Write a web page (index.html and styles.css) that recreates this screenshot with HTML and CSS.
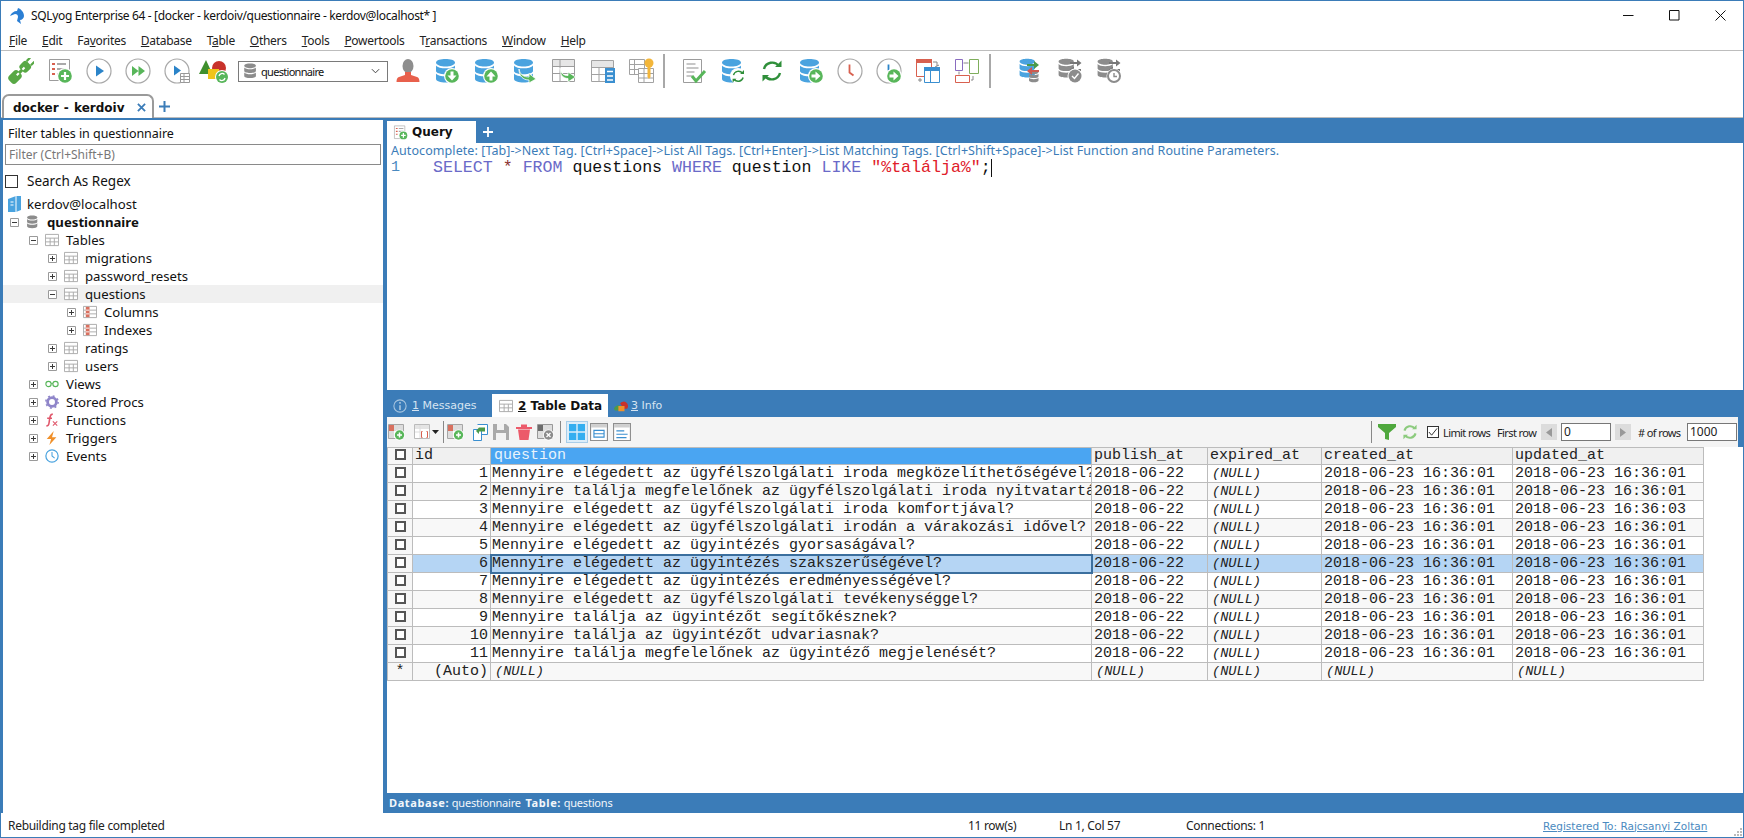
FILE: index.html
```html
<!DOCTYPE html>
<html lang="en">
<head>
    <meta charset="UTF-8">
    <title>SQLyog Enterprise 64</title>
    <link rel="stylesheet" href="styles.css">
</head>
<body>
<svg class="defs" xmlns="http://www.w3.org/2000/svg">
    <symbol id="db" viewBox="0 0 26 26">
        <path d="M2 4.5C2 2 7 1 11.5 1S21 2 21 4.5 16 8.5 11.5 8.5 2 7 2 4.5z" fill="#4aa3df"/>
        <path d="M2 7.5c1.500 2 5.500 2.800 9.500 2.800S19.500 9.500 21 7.500v5.500c0 2-4.500 3.200-9.500 3.200S2 15 2 13z" fill="#4aa3df"/>
        <path d="M2 15.500c1.500 2 5.500 2.800 9.500 2.800s8-.8 9.500-2.800V21c0 2.200-4.500 3.500-9.500 3.500S2 23.200 2 21z" fill="#4aa3df"/>
    </symbol>
    <symbol id="db-grey" viewBox="0 0 26 26">
        <path d="M2 4.500C2 2 7 1 11.500 1S21 2 21 4.500 16 8.500 11.500 8.500 2 7 2 4.500z" fill="#8c8c8c"/>
        <path d="M2 7.500c1.500 2 5.500 2.800 9.500 2.800S19.500 9.500 21 7.500v5.500c0 2-4.500 3.200-9.500 3.200S2 15 2 13z" fill="#8c8c8c"/>
        <path d="M2 15.500c1.500 2 5.500 2.800 9.500 2.800s8-.8 9.500-2.800V21c0 2.200-4.500 3.500-9.500 3.500S2 23.200 2 21z" fill="#8c8c8c"/>
    </symbol>
    <symbol id="grid" viewBox="0 0 15 15">
        <path d="M.5 1.500h14v12H.5zM.5 5.500h14M.5 9.500h14M5.500 5.500v8M10 5.500v8" fill="#fff" stroke="#a9a9a9"/>
    </symbol>
    <symbol id="grid-red" viewBox="0 0 15 15">
        <path d="M.5 1.500h14v12H.5zM.5 5.500h14M.5 9.500h14" fill="#fff" stroke="#a9a9a9"/>
        <rect x="3" y="2" width="4" height="11" fill="#d8705f"/>
        <path d="M3 5.500h4M3 9.500h4" stroke="#fff"/>
    </symbol>
    <symbol id="plus-box" viewBox="0 0 9 9">
        <path d="M.5.500h8v8h-8z" fill="#fff" stroke="#9a9a9a"/>
        <path d="M2 4.500h5M4.500 2v5" stroke="#3a3a3a"/>
    </symbol>
    <symbol id="minus-box" viewBox="0 0 9 9">
        <path d="M.5.500h8v8h-8z" fill="#fff" stroke="#9a9a9a"/>
        <path d="M2 4.500h5" stroke="#3a3a3a"/>
    </symbol>
    <symbol id="badge-plus" viewBox="0 0 26 26">
        <circle cx="18" cy="18" r="8" fill="#fff"/><circle cx="18" cy="18" r="6.800" fill="#58b65a"/>
        <path d="M14 18h8M18 14v8" stroke="#fff" stroke-width="2.200"/>
    </symbol>
    <symbol id="badge-right" viewBox="0 0 26 26">
        <circle cx="18" cy="18" r="8" fill="#fff"/><circle cx="18" cy="18" r="6.800" fill="#58b65a"/>
        <path d="M13.500 16.500h4V13.500l5 4.500-5 4.500v-3h-4z" fill="#fff"/>
    </symbol>
    <symbol id="badge-down" viewBox="0 0 26 26">
        <circle cx="18" cy="18" r="8" fill="#fff"/><circle cx="18" cy="18" r="6.800" fill="#58b65a"/>
        <path d="M16.500 13.500h3v4h3l-4.500 5-4.500-5h3z" fill="#fff"/>
    </symbol>
    <symbol id="badge-up" viewBox="0 0 26 26">
        <circle cx="18" cy="18" r="8" fill="#fff"/><circle cx="18" cy="18" r="6.800" fill="#58b65a"/>
        <path d="M16.500 22.500h3v-4h3l-4.500-5-4.500 5h3z" fill="#fff"/>
    </symbol>
    <symbol id="arrows-sync" viewBox="0 0 26 26">
        <path d="M5 11a8.500 8.500 0 0 1 15-3M21 15a8.500 8.500 0 0 1-15 3" fill="none" stroke="#2f8f3a" stroke-width="2.400"/>
        <path d="M16 9h6.500V2.500zM10 17H3.500v6.500z" fill="#2f8f3a"/>
    </symbol>
    <symbol id="swap-arrows" viewBox="0 0 26 26">
        <path d="M9 6h7V3l5 4-5 4V8H9z" fill="#4a9a4a"/>
        <path d="M21 13h-7v-3l-5 4 5 4v-3h7z" fill="#cf5a50" transform="translate(0 -1)"/>
    </symbol>
    <symbol id="swap-arrows-grey" viewBox="0 0 26 26">
        <path d="M13 4h7V1.500l4.500 3.500L20 8.500V6h-7z" fill="#777"/>
        <path d="M24 11h-7V8.500L12.500 12l4.500 3.500V13h7z" fill="#777"/>
    </symbol>
    <symbol id="ring" viewBox="0 0 26 26">
        <circle cx="13" cy="13" r="12" fill="#fff" stroke="#a8a8a8" stroke-width="1.200"/>
    </symbol>
    <symbol id="mini-new" viewBox="0 0 18 18">
        <path d="M.5 1.500h15v14H.5z" fill="#fff" stroke="#a6a6a6"/>
        <rect x="1" y="2" width="5" height="6" fill="#d8705f"/><rect x="6" y="2" width="9" height="6" fill="#ddd"/>
        <rect x="1" y="8" width="5" height="7" fill="#ddd"/>
        <circle cx="11.500" cy="12" r="5.500" fill="#fff"/><circle cx="11.500" cy="12" r="4.700" fill="#58b65a"/>
        <path d="M9 12h5M11.500 9.500v5" stroke="#fff" stroke-width="1.500"/>
    </symbol>
</svg>

<div class="window">
    <header class="titlebar">
        <svg class="app-logo" viewBox="0 0 16 16"><path d="M8 0c3 1 6 4 6 8 0 2-2 4-4 4l1 4-4-3 1-4c0-2-1-3-3-3L0 8c1-3 4-5 7-5z" fill="#2b7fd4"/></svg>
        <span class="title-text">SQLyog Enterprise 64 - [docker - kerdoiv/questionnaire - kerdov@localhost* ]</span>
        <div class="win-btns">
            <svg viewBox="0 0 11 11"><path d="M0 5.500h10.500" stroke="#111"/></svg>
            <svg viewBox="0 0 11 11"><path d="M.5.500h9.500v9.500H.5z" fill="none" stroke="#111"/></svg>
            <svg viewBox="0 0 11 11"><path d="M.5.500l10 10M10.500.500l-10 10" stroke="#111"/></svg>
        </div>
    </header>

    <nav class="menubar">
        <span><u>F</u>ile</span>
        <span><u>E</u>dit</span>
        <span>Fa<u>v</u>orites</span>
        <span><u>D</u>atabase</span>
        <span>T<u>a</u>ble</span>
        <span><u>O</u>thers</span>
        <span><u>T</u>ools</span>
        <span><u>P</u>owertools</span>
        <span>T<u>r</u>ansactions</span>
        <span><u>W</u>indow</span>
        <span><u>H</u>elp</span>
    </nav>

    <div class="toolbar">
        <div class="tool">
            <svg viewBox="0 0 26 26"><g transform="rotate(-45 13 13)"><rect x="-2" y="8" width="13" height="10" rx="3.500" fill="#58a845"/><rect x="14" y="8" width="10" height="10" rx="3" fill="#58a845"/><path d="M24 10h5M24 16h5" stroke="#58a845" stroke-width="2.200"/><path d="M7 13h11" stroke="#fff" stroke-width="2"/><path d="M10 13h5" stroke="#58a845" stroke-width="3"/></g></svg>
        </div>
        <div class="tool">
            <svg viewBox="0 0 26 26"><path d="M2.500 1.500h20v21h-20z" fill="#fff" stroke="#9c9c9c"/><path d="M5 6h3M5 11h3M5 16h3" stroke="#d8604f" stroke-width="2"/><path d="M10 6h9M10 11h9M10 16h4" stroke="#aaa" stroke-width="2"/><use href="#badge-plus"/></svg>
        </div>
        <div class="tool">
            <svg viewBox="0 0 26 26"><use href="#ring"/><path d="M10 7.500v11l8-5.500z" fill="#2b84c9"/></svg>
        </div>
        <div class="tool">
            <svg viewBox="0 0 26 26"><use href="#ring"/><path d="M7 8v10l6.500-5zM13.500 8v10l6.500-5z" fill="#58b65a"/></svg>
        </div>
        <div class="tool">
            <svg viewBox="0 0 26 26"><use href="#ring"/><path d="M10 7.500v10l7-5z" fill="#2b84c9"/><path d="M16.500 15.500h9v9h-9zM16.500 18.500h9M16.500 21.500h9M20 15.500v9" fill="#fff" stroke="#999"/></svg>
        </div>
        <div class="tool tool-shapes">
            <svg viewBox="0 0 30 26"><path d="M7 2l6.500 14H0z" fill="#3f8f2d"/><circle cx="20" cy="10" r="7" fill="#c8322b"/><rect x="9" y="11" width="11" height="10" fill="#f0c419"/><circle cx="23" cy="19" r="7" fill="#fff"/><circle cx="23" cy="19" r="6" fill="#58b65a"/><path d="M20 18a3.200 3.200 0 0 1 5.500-1.500M26 20a3.200 3.200 0 0 1-5.500 1.500" fill="none" stroke="#fff" stroke-width="1.300"/></svg>
        </div>

        <div class="db-combo">
            <svg class="combo-db" viewBox="0 0 26 26"><use href="#db-grey"/></svg>
            <span>questionnaire</span>
            <svg class="combo-arrow" viewBox="0 0 10 6"><path d="M1 1l4 4 4-4" fill="none" stroke="#444" stroke-width="1.100"/></svg>
        </div>

        <div class="tool">
            <svg viewBox="0 0 26 26"><ellipse cx="13" cy="8" rx="5.500" ry="7" fill="#8e8e8e"/><path d="M10 14h6v3l6 2c1.500.5 2.500 2 2.500 5h-23c0-3 1-4.500 2.500-5l6-2z" fill="#e8604c"/></svg>
        </div>
        <div class="tool">
            <svg viewBox="0 0 26 26"><use href="#db"/><use href="#badge-down"/></svg>
        </div>
        <div class="tool">
            <svg viewBox="0 0 26 26"><use href="#db"/><use href="#badge-up"/></svg>
        </div>
        <div class="tool">
            <svg viewBox="0 0 26 26"><use href="#db"/><path d="M7 11c1 6 5 8 10 8v-3.500l7 5.500-7 4v-3C11 22 7 18 7 11z" fill="#58b65a" stroke="#fff" stroke-width=".8"/></svg>
        </div>
        <div class="tool">
            <svg viewBox="0 0 26 26"><path d="M1.500 1.500h22v22h-22z" fill="#fff" stroke="#9c9c9c"/><rect x="2" y="2" width="21" height="6" fill="#e6e6e6"/><path d="M1.500 8.500h22M1.500 15.500h22M9 1.500v22" stroke="#9c9c9c"/><path d="M9 10c1 6 4 7.500 8 7.500V14l7.500 5-7.500 5v-3.500C12 20.500 9 17 9 10z" fill="#58b65a" stroke="#fff" stroke-width=".8"/></svg>
        </div>
        <div class="tool">
            <svg viewBox="0 0 26 26"><path d="M1.500 2.500h22v21h-22z" fill="#fff" stroke="#a2a2a2"/><rect x="2" y="3" width="21" height="6" fill="#e6e6e6"/><path d="M1.500 9.500h22M1.500 16.500h22M9 9.500v14M16 9.500v14" stroke="#a2a2a2"/><rect x="15" y="10" width="10" height="15" fill="#3a8fd0"/><path d="M17 13.500h6M17 18h6M17 22h6" stroke="#fff" stroke-width="1.600"/></svg>
        </div>
        <div class="tool">
            <svg viewBox="0 0 26 26"><path d="M.5 1.500h15v15H.5zM.5 6.500h15M.5 11.500h15M5.500 1.500v15" fill="#fff" stroke="#a2a2a2"/><path d="M9.500 10.500h15v14h-15zM9.500 15.500h15M9.500 20h15M15 10.500v14" fill="#fff" stroke="#a2a2a2"/><circle cx="20" cy="5" r="4.500" fill="#f3b63a"/><path d="M18.500 8h3v11l-1.500 2-1.500-2z" fill="#f3b63a"/></svg>
        </div>

        <div class="tb-sep tb-sep-first"></div>

        <div class="tool">
            <svg viewBox="0 0 26 26"><path d="M2.500 1.500h18v23h-18z" fill="#fff" stroke="#9c9c9c"/><path d="M5.500 6h9M5.500 10h12M5.500 14h8M5.500 18h6" stroke="#b5b5b5" stroke-width="1.600"/><path d="M11 18l4 5 9-10" fill="none" stroke="#58b65a" stroke-width="3"/></svg>
        </div>
        <div class="tool">
            <svg viewBox="0 0 26 26"><use href="#db"/><circle cx="18" cy="18" r="8" fill="#fff"/><g transform="translate(10.500 10.500) scale(.6)"><use href="#arrows-sync" width="26" height="26"/></g></svg>
        </div>
        <div class="tool">
            <svg viewBox="0 0 26 26"><use href="#arrows-sync"/></svg>
        </div>
        <div class="tool">
            <svg viewBox="0 0 26 26"><use href="#db"/><use href="#badge-right"/></svg>
        </div>
        <div class="tool">
            <svg viewBox="0 0 26 26"><use href="#ring"/><path d="M12.500 6.500v8l4 3" fill="none" stroke="#d8604f" stroke-width="1.800"/></svg>
        </div>
        <div class="tool">
            <svg viewBox="0 0 26 26"><use href="#ring"/><path d="M12.500 6.500v6" stroke="#2b84c9" stroke-width="1.800"/><use href="#badge-right"/></svg>
        </div>
        <div class="tool">
            <svg viewBox="0 0 26 26"><path d="M1.500 1.500h15v17h-15z" fill="#fff" stroke="#d8604f"/><rect x="1" y="1" width="16" height="4" fill="#d8604f"/><path d="M18 4h4v4M20 9l2 -1 2-1" stroke="#888" fill="none"/><path d="M9.500 9.500h15v15h-15z" fill="#fff" stroke="#3a8fd0"/><rect x="9" y="9" width="16" height="4" fill="#3a8fd0"/><path d="M15.500 13v11" stroke="#3a8fd0"/><path d="M3 22h4M5 20v4" stroke="#888"/></svg>
        </div>
        <div class="tool">
            <svg viewBox="0 0 26 26"><path d="M1.500 1.500h7v11h-7z" fill="#fff" stroke="#8a6cc0"/><path d="M15.500 1.500h9v14h-9z" fill="#fff" stroke="#7fae5c"/><path d="M1.500 17.500h14v7h-14z" fill="#fff" stroke="#d8604f"/><path d="M9.500 5h5M5 13.500v3M19 18v4h-2" fill="none" stroke="#888"/></svg>
        </div>

        <div class="tb-sep tb-sep-second"></div>

        <div class="tool">
            <svg viewBox="0 0 26 26"><g transform="scale(.8)"><use href="#db" width="26" height="26"/></g><g transform="translate(10 12) scale(.5)"><use href="#db-grey" width="26" height="26"/></g><use href="#swap-arrows"/></svg>
        </div>
        <div class="tool">
            <svg viewBox="0 0 26 26"><g transform="scale(.8)"><use href="#db-grey" width="26" height="26"/></g><use href="#swap-arrows-grey"/><circle cx="18" cy="18" r="7.500" fill="#fff"/><circle cx="18" cy="18" r="6.500" fill="#8c8c8c"/><path d="M15 18l2.500 2.500 4-5" fill="none" stroke="#fff" stroke-width="1.400"/></svg>
        </div>
        <div class="tool">
            <svg viewBox="0 0 26 26"><g transform="scale(.8)"><use href="#db-grey" width="26" height="26"/></g><use href="#swap-arrows-grey"/><circle cx="18" cy="18" r="7.500" fill="#fff"/><circle cx="18" cy="18" r="6" fill="none" stroke="#8c8c8c" stroke-width="2"/><path d="M18 15v3.500h3" fill="none" stroke="#8c8c8c" stroke-width="1.400"/></svg>
        </div>
    </div>

    <div class="conn-tabs">
        <div class="conn-tab">
            <span>docker - kerdoiv</span>
            <svg viewBox="0 0 10 10"><path d="M1 1l8 8M9 1l-8 8" stroke="#3b7cb8" stroke-width="2"/></svg>
        </div>
        <svg class="tab-plus" viewBox="0 0 11 11"><path d="M0 5.500h11M5.500 0v11" stroke="#3b7cb8" stroke-width="2"/></svg>
    </div>

    <main class="main">
        <aside class="browser">
            <div class="filter-label">Filter tables in questionnaire</div>
            <div class="filter-input">Filter (Ctrl+Shift+B)</div>
            <div class="regex-row"><span class="regex-box"></span>Search As Regex</div>
            <ul class="tree">
                <li class="tree-row tree-root">
                    <svg class="t-root" viewBox="0 0 13 16"><path d="M0 3l8-3h5v14l-5 2H0z" fill="#4aa3df"/><path d="M8 0v16" stroke="#fff"/><path d="M2.500 6h3M2.500 9h3" stroke="#fff"/></svg>
                    kerdov@localhost
                </li>
                <li class="tree-row lv0 tree-db">
                    <svg class="exp"><use href="#minus-box"/></svg>
                    <svg class="t-ico" viewBox="0 0 26 26"><use href="#db-grey"/></svg>
                    questionnaire
                </li>
                <li class="tree-row lv1">
                    <svg class="exp"><use href="#minus-box"/></svg>
                    <svg class="t-ico"><use href="#grid"/></svg>
                    Tables
                </li>
                <li class="tree-row lv2">
                    <svg class="exp"><use href="#plus-box"/></svg>
                    <svg class="t-ico"><use href="#grid"/></svg>
                    migrations
                </li>
                <li class="tree-row lv2">
                    <svg class="exp"><use href="#plus-box"/></svg>
                    <svg class="t-ico"><use href="#grid"/></svg>
                    password_resets
                </li>
                <li class="tree-row lv2 tree-current">
                    <svg class="exp"><use href="#minus-box"/></svg>
                    <svg class="t-ico"><use href="#grid"/></svg>
                    questions
                </li>
                <li class="tree-row lv3">
                    <svg class="exp"><use href="#plus-box"/></svg>
                    <svg class="t-ico"><use href="#grid-red"/></svg>
                    Columns
                </li>
                <li class="tree-row lv3">
                    <svg class="exp"><use href="#plus-box"/></svg>
                    <svg class="t-ico"><use href="#grid-red"/></svg>
                    Indexes
                </li>
                <li class="tree-row lv2">
                    <svg class="exp"><use href="#plus-box"/></svg>
                    <svg class="t-ico"><use href="#grid"/></svg>
                    ratings
                </li>
                <li class="tree-row lv2">
                    <svg class="exp"><use href="#plus-box"/></svg>
                    <svg class="t-ico"><use href="#grid"/></svg>
                    users
                </li>
                <li class="tree-row lv1">
                    <svg class="exp"><use href="#plus-box"/></svg>
                    <svg class="t-ico" viewBox="0 0 16 16"><circle cx="4" cy="8" r="3" fill="none" stroke="#58b65a" stroke-width="1.300"/><circle cx="12" cy="8" r="3" fill="none" stroke="#58b65a" stroke-width="1.300"/><path d="M7 7.500h2" stroke="#58b65a"/></svg>
                    Views
                </li>
                <li class="tree-row lv1">
                    <svg class="exp"><use href="#plus-box"/></svg>
                    <svg class="t-ico" viewBox="0 0 16 16"><circle cx="8" cy="8" r="5" fill="none" stroke="#8f85c9" stroke-width="3.200"/><circle cx="8" cy="8" r="7" fill="none" stroke="#8f85c9" stroke-width="1.800" stroke-dasharray="2.200 3.300"/></svg>
                    Stored Procs
                </li>
                <li class="tree-row lv1">
                    <svg class="exp"><use href="#plus-box"/></svg>
                    <svg class="t-ico" viewBox="0 0 16 16"><path d="M9 1.500C6.500 1 6 3 5.500 5.500L4.500 12c-.3 2-1.500 3-3 2.500M2.500 6H8" fill="none" stroke="#e0566a" stroke-width="1.800"/><path d="M9 9.500l5 5M14 9.500l-5 5" stroke="#e0566a" stroke-width="1.200"/></svg>
                    Functions
                </li>
                <li class="tree-row lv1">
                    <svg class="exp"><use href="#plus-box"/></svg>
                    <svg class="t-ico" viewBox="0 0 16 16"><path d="M10 0 2 9h5l-2 7 8-9H8z" fill="#f0902a"/></svg>
                    Triggers
                </li>
                <li class="tree-row lv1">
                    <svg class="exp"><use href="#plus-box"/></svg>
                    <svg class="t-ico" viewBox="0 0 16 16"><circle cx="8" cy="8" r="7" fill="#fff" stroke="#4aa3df" stroke-width="1.400"/><path d="M8 3.500V8l3 2.500" fill="none" stroke="#4aa3df" stroke-width="1.200"/></svg>
                    Events
                </li>
            </ul>
        </aside>

        <section class="work">
            <div class="query-tabs">
                <div class="query-tab">
                    <svg viewBox="0 0 26 26"><path d="M2.500 1.500h18v22h-18z" fill="#fff" stroke="#9c9c9c"/><path d="M5 6h3M5 11h3M5 16h3" stroke="#d8604f" stroke-width="2"/><path d="M10 6h8M10 11h8" stroke="#aaa" stroke-width="2"/><use href="#badge-plus"/></svg>
                    <span>Query</span>
                </div>
                <svg class="query-plus" viewBox="0 0 11 11"><path d="M0 5.500h11M5.500 0v11" stroke="#fff" stroke-width="2"/></svg>
            </div>

            <div class="editor">
                <div class="hint">Autocomplete: [Tab]-&gt;Next Tag. [Ctrl+Space]-&gt;List All Tags. [Ctrl+Enter]-&gt;List Matching Tags. [Ctrl+Shift+Space]-&gt;List Function and Routine Parameters.</div>
                <div class="code-line">
                    <span class="line-no">1</span>
                    <code class="sql"><span class="kw">SELECT</span> <span class="star">*</span> <span class="kw">FROM</span> questions <span class="kw">WHERE</span> question <span class="kw">LIKE</span> <span class="str">"%találja%"</span>;<span class="caret"></span></code>
                </div>
            </div>

            <div class="result-tabs">
                <div class="result-tab">
                    <svg viewBox="0 0 16 16"><circle cx="8" cy="8" r="7" fill="none" stroke="#a9c6e0" stroke-width="1.200"/><path d="M8 3.500v2M8 7v5.500" stroke="#a9c6e0" stroke-width="1.800"/></svg>
                    <span><u>1</u> Messages</span>
                </div>
                <div class="result-tab result-tab-on">
                    <svg viewBox="0 0 16 16"><use href="#grid"/></svg>
                    <span><u>2</u> Table Data</span>
                </div>
                <div class="result-tab result-tab-info">
                    <svg viewBox="0 0 16 16"><path d="M0 11a5 4 0 0 1 8-3l-2 5H1z" fill="#4a9a4a"/><path d="M7 5a5 5 0 0 1 8 6l-4 0z" fill="#c8322b"/><rect x="5" y="8" width="7" height="6" fill="#f0902a"/></svg>
                    <span><u>3</u> Info</span>
                </div>
            </div>

            <div class="result-bar">
                <svg class="rb rb-first"><use href="#mini-new"/></svg>
                <svg class="rb rb-wide" viewBox="0 0 18 18"><path d="M.5 1.500h15v14H.5z" fill="#fff" stroke="#bbb"/><rect x="1" y="2" width="14" height="4" fill="#e4e4e4"/><path d="M1 9h5M6 2v13" stroke="#ddd"/><path d="M8.500 8.500h-1v6h1M12.500 8.500h1v6h-1" fill="none" stroke="#d8604f"/></svg>
                <svg class="rb-caret" viewBox="0 0 7 4"><path d="M0 0h7L3.500 4z" fill="#222"/></svg>
                <span class="rb-sep"></span>
                <svg class="rb"><use href="#mini-new"/></svg>
                <svg class="rb" viewBox="0 0 18 18"><path d="M3.500 6.500h8v11h-8zM7.500 1.500h10v10h-6" fill="#fff" stroke="#3a8fd0"/><path d="M15 4.500H9L6 8l3 3V8.500h6z" fill="#4a9a4a"/></svg>
                <svg class="rb" viewBox="0 0 18 18"><path d="M1 1h13l3 3v13H1z" fill="#a9a9a9"/><rect x="5" y="1" width="7" height="6" fill="#f2f2f2"/><rect x="4" y="10" width="10" height="7" fill="#f2f2f2"/></svg>
                <svg class="rb" viewBox="0 0 18 18"><path d="M1 4h16v2H1zM3 6.500h12L13.500 17h-9z" fill="#ec5a6a"/><rect x="6" y="1.500" width="6" height="3" fill="#ec5a6a"/></svg>
                <svg class="rb" viewBox="0 0 18 18"><path d="M.5 1.500h15v14H.5z" fill="#ddd" stroke="#999"/><rect x="1" y="2" width="5" height="6" fill="#6c6c6c"/><circle cx="11.500" cy="12" r="5.500" fill="#fff"/><circle cx="11.500" cy="12" r="4.700" fill="#8c8c8c"/><path d="M9.500 10l4 4M13.500 10l-4 4" stroke="#fff" stroke-width="1.300"/></svg>
                <span class="rb-sep rb-sep-b"></span>
                <span class="view-on"><svg viewBox="0 0 16 16"><path d="M0 0h7.300v7.300H0zM8.700 0H16v7.300H8.700zM0 8.700h7.300V16H0zM8.700 8.700H16V16H8.700z" fill="#33aef0"/></svg></span>
                <svg class="rb" viewBox="0 0 16 16"><path d="M.5.500h15v15H.5z" fill="#fff" stroke="#8f8f8f"/><rect x="1" y="1" width="14" height="3" fill="#cfcfcf"/><path d="M3.500 6.500h9v3h-9zM3.500 9.500h9v3h-9z" fill="#fff" stroke="#3a8fd0"/></svg>
                <svg class="rb" viewBox="0 0 16 16"><path d="M.5.500h15v15H.5z" fill="#fff" stroke="#8f8f8f"/><rect x="1" y="1" width="14" height="3" fill="#cfcfcf"/><path d="M3 7h7M3 10h10M3 13h9" stroke="#3a8fd0"/></svg>

                <span class="rb-sep rb-sep-c"></span>
                <svg class="rb" viewBox="0 0 18 18"><path d="M0 1h18v3l-7 6v7l-4-1v-6L0 4z" fill="#4fa83d"/></svg>
                <svg class="rb rb-refresh" viewBox="0 0 26 26"><path d="M5 11a8.500 8.500 0 0 1 15-3M21 15a8.500 8.500 0 0 1-15 3" fill="none" stroke="#8ccb7e" stroke-width="3"/><path d="M16 9h6.500V2.500zM10 17H3.500v6.500z" fill="#8ccb7e"/></svg>
                <span class="limit-box"><svg viewBox="0 0 11 11"><path d="M1 5.500l3 3.500 6-7.500" fill="none" stroke="#333" stroke-width="1.100"/></svg></span>
                <span class="limit-label">Limit rows</span>
                <span class="first-label">First row</span>
                <span class="pager"><svg viewBox="0 0 6 9"><path d="M6 0v9L0 4.500z" fill="#999"/></svg></span>
                <span class="num-input first-input">0</span>
                <span class="pager"><svg viewBox="0 0 6 9"><path d="M0 0v9l6-4.500z" fill="#999"/></svg></span>
                <span class="rows-label"># of rows</span>
                <span class="num-input rows-input">1000</span>
            </div>

            <div class="grid-wrap">
                <table class="grid">
                    <colgroup>
                        <col class="c-check"><col class="c-id"><col class="c-question"><col class="c-pub"><col class="c-exp"><col class="c-created"><col class="c-updated">
                    </colgroup>
                    <thead>
                        <tr><th class="mark"><i class="chk"></i></th><th>id</th><th class="sel-col">question</th><th>publish_at</th><th>expired_at</th><th>created_at</th><th>updated_at</th></tr>
                    </thead>
                    <tbody>
                        <tr><td class="mark"><i class="chk"></i></td><td class="num">1</td><td class="q">Mennyire elégedett az ügyfélszolgálati iroda megközelíthetőségével?</td><td>2018-06-22</td><td class="null">(NULL)</td><td>2018-06-23 16:36:01</td><td>2018-06-23 16:36:01</td></tr>
                        <tr><td class="mark"><i class="chk"></i></td><td class="num">2</td><td class="q">Mennyire találja megfelelőnek az ügyfélszolgálati iroda nyitvatartási idejével?</td><td>2018-06-22</td><td class="null">(NULL)</td><td>2018-06-23 16:36:01</td><td>2018-06-23 16:36:01</td></tr>
                        <tr><td class="mark"><i class="chk"></i></td><td class="num">3</td><td class="q">Mennyire elégedett az ügyfélszolgálati iroda komfortjával?</td><td>2018-06-22</td><td class="null">(NULL)</td><td>2018-06-23 16:36:01</td><td>2018-06-23 16:36:03</td></tr>
                        <tr><td class="mark"><i class="chk"></i></td><td class="num">4</td><td class="q">Mennyire elégedett az ügyfélszolgálati irodán a várakozási idővel?</td><td>2018-06-22</td><td class="null">(NULL)</td><td>2018-06-23 16:36:01</td><td>2018-06-23 16:36:01</td></tr>
                        <tr><td class="mark"><i class="chk"></i></td><td class="num">5</td><td class="q">Mennyire elégedett az ügyintézés gyorsaságával?</td><td>2018-06-22</td><td class="null">(NULL)</td><td>2018-06-23 16:36:01</td><td>2018-06-23 16:36:01</td></tr>
                        <tr class="row-sel"><td class="mark"><i class="chk"></i></td><td class="num">6</td><td class="q cell-focus">Mennyire elégedett az ügyintézés szakszerűségével?</td><td>2018-06-22</td><td class="null">(NULL)</td><td>2018-06-23 16:36:01</td><td>2018-06-23 16:36:01</td></tr>
                        <tr><td class="mark"><i class="chk"></i></td><td class="num">7</td><td class="q">Mennyire elégedett az ügyintézés eredményességével?</td><td>2018-06-22</td><td class="null">(NULL)</td><td>2018-06-23 16:36:01</td><td>2018-06-23 16:36:01</td></tr>
                        <tr><td class="mark"><i class="chk"></i></td><td class="num">8</td><td class="q">Mennyire elégedett az ügyfélszolgálati tevékenységgel?</td><td>2018-06-22</td><td class="null">(NULL)</td><td>2018-06-23 16:36:01</td><td>2018-06-23 16:36:01</td></tr>
                        <tr><td class="mark"><i class="chk"></i></td><td class="num">9</td><td class="q">Mennyire találja az ügyintézőt segítőkésznek?</td><td>2018-06-22</td><td class="null">(NULL)</td><td>2018-06-23 16:36:01</td><td>2018-06-23 16:36:01</td></tr>
                        <tr><td class="mark"><i class="chk"></i></td><td class="num">10</td><td class="q">Mennyire találja az ügyintézőt udvariasnak?</td><td>2018-06-22</td><td class="null">(NULL)</td><td>2018-06-23 16:36:01</td><td>2018-06-23 16:36:01</td></tr>
                        <tr><td class="mark"><i class="chk"></i></td><td class="num">11</td><td class="q">Mennyire találja megfelelőnek az ügyintéző megjelenését?</td><td>2018-06-22</td><td class="null">(NULL)</td><td>2018-06-23 16:36:01</td><td>2018-06-23 16:36:01</td></tr>
                        <tr><td class="mark">*</td><td class="num">(Auto)</td><td class="null">(NULL)</td><td class="null">(NULL)</td><td class="null">(NULL)</td><td class="null">(NULL)</td><td class="null">(NULL)</td></tr>
                    </tbody>
                </table>
            </div>

            <div class="db-bar"><b>Database:</b> questionnaire <b class="db-bar-table">Table:</b> questions</div>
        </section>
    </main>

    <footer class="statusbar">
        <span class="st-msg">Rebuilding tag file completed</span>
        <span class="st-rows">11 row(s)</span>
        <span class="st-pos">Ln 1, Col 57</span>
        <span class="st-conn">Connections: 1</span>
        <a class="st-reg">Registered To: Rajcsanyi Zoltan</a>
        <svg class="st-grip" viewBox="0 0 9 9"><path d="M7 1h2v2H7zM4 4h2v2H4zM7 4h2v2H7zM1 7h2v2H1zM4 7h2v2H4zM7 7h2v2H7z" fill="#bbb"/></svg>
    </footer>
</div>
</body>
</html>
```

FILE: styles.css
```css
* {
    margin: 0;
    padding: 0;
    box-sizing: border-box;
}

html, body {
    height: 100%;
    overflow: hidden;
}

body {
    font-family: "Noto Sans", "Open Sans", sans-serif;
    font-size: 12px;
    color: #111;
    background: #fff;
}

.defs {
    display: none;
}

.window {
    width: 1744px;
    height: 838px;
    display: flex;
    flex-direction: column;
    border: 1px solid #3b7cb8;
}

/* title */
.titlebar {
    height: 29px;
    display: flex;
    align-items: center;
    padding-left: 9px;
    flex: none;
}

.app-logo {
    width: 16px;
    height: 16px;
    margin-right: 5px;
}

.title-text {
    letter-spacing: -.35px;
}

.win-btns {
    margin-left: auto;
    display: flex;
    gap: 35px;
    padding-right: 17px;
}

.win-btns svg {
    width: 11px;
    height: 11px;
}

/* menu */
.menubar {
    height: 21px;
    flex: none;
    display: flex;
    align-items: center;
    gap: 15px;
    padding-left: 8px;
    border-bottom: 1px solid #bdbdbd;
    letter-spacing: -.3px;
    color: #222;
}

/* main toolbar */
.toolbar {
    height: 42px;
    flex: none;
    display: flex;
    align-items: center;
    padding-bottom: 2px;
}

.tool {
    width: 39px;
    height: 28px;
    flex: none;
    display: flex;
    align-items: center;
    justify-content: center;
}

.tool svg {
    width: 26px;
    height: 26px;
}

.tool-shapes {
    margin-left: -2px;
}

.tool-shapes svg {
    width: 30px;
}

.db-combo {
    width: 150px;
    height: 21px;
    margin-left: 5px;
    flex: none;
    border: 1px solid #7a7a7a;
    display: flex;
    align-items: center;
    padding: 0 7px 0 4px;
    font-size: 11px;
    letter-spacing: -.7px;
}

.combo-db {
    width: 16px;
    height: 16px;
    margin-right: 2px;
}

.combo-arrow {
    width: 9px;
    height: 6px;
    margin-left: auto;
}

.tb-sep {
    width: 2px;
    height: 34px;
    flex: none;
    background: #a8a8a8;
}

.tb-sep-first {
    margin: 0 9.500px 0 2px;
}

.tb-sep-second {
    margin: 0 20.500px 0 2px;
}

/* connection tabs */
.conn-tabs {
    height: 25px;
    flex: none;
    display: flex;
    align-items: flex-end;
    padding-left: 1px;
    border-bottom: 1px solid #bdbdbd;
}

.conn-tab {
    width: 152px;
    height: 24px;
    margin-bottom: -1px;
    background: #fff;
    border: 2px solid #9a9a9a;
    border-bottom: 0;
    border-radius: 7px 7px 0 0;
    display: flex;
    align-items: center;
    padding: 1px 0 0 9px;
    font-family: "DejaVu Sans", sans-serif;
    font-weight: 700;
    font-size: 12px;
    color: #111;
}

.conn-tab span {
    word-spacing: 1px;
}

.conn-tab svg {
    width: 9px;
    height: 9px;
    margin-left: auto;
    margin-right: 6px;
}

.tab-plus {
    width: 11px;
    height: 11px;
    margin: 0 0 5px 5px;
}

/* main area */
.main {
    height: 695px;
    flex: none;
    display: flex;
    background: #3b7cb8;
    padding-left: 2px;
}

.browser {
    width: 380px;
    margin-top: 2px;
    background: #fff;
    flex: none;
}

.filter-label {
    height: 24px;
    padding: 5px 0 0 5px;
    font-size: 12.500px;
    letter-spacing: -.05px;
}

.filter-input {
    width: 376px;
    height: 21px;
    margin-left: 2px;
    border: 1px solid #8a8a8a;
    padding: 1px 3px;
    color: #777;
}

.regex-row {
    height: 18px;
    display: flex;
    align-items: center;
    margin: 7px 0 0 2px;
    font-size: 13.500px;
}

.regex-box {
    width: 13px;
    height: 13px;
    border: 1px solid #333;
    margin-right: 9px;
}

.tree {
    list-style: none;
    margin-top: 5px;
    font-size: 13.200px;
}

.tree-row {
    height: 18px;
    display: flex;
    align-items: center;
    white-space: nowrap;
}

.tree-root {
    padding-left: 5px;
}

.t-root {
    width: 13px;
    height: 16px;
    margin-right: 6px;
}

.lv0 { padding-left: 7px; }
.lv1 { padding-left: 26px; }
.lv2 { padding-left: 45px; }
.lv3 { padding-left: 64px; }

.exp {
    width: 9px;
    height: 9px;
    margin-right: 7px;
    flex: none;
}

.t-ico {
    width: 14px;
    height: 14px;
    margin-right: 7px;
    flex: none;
}

.tree-db {
    font-weight: 700;
}

.tree-current {
    background: #f0f0f0;
}

/* right side */
.work {
    flex: 1;
    margin-left: 4px;
    display: flex;
    flex-direction: column;
    min-width: 0;
}

.query-tabs {
    height: 25px;
    flex: none;
    display: flex;
    align-items: flex-end;
}

.query-tab {
    width: 89px;
    height: 22px;
    background: #fff;
    display: flex;
    align-items: center;
    padding-left: 6px;
    font-family: "DejaVu Sans", sans-serif;
    font-weight: 700;
    font-size: 12px;
    gap: 4px;
}

.query-tab svg {
    width: 15px;
    height: 15px;
}

.query-plus {
    width: 10px;
    height: 10px;
    margin: 0 0 6px 7px;
}

.editor {
    height: 247px;
    flex: none;
    background: #fff;
    padding-left: 4px;
}

.hint {
    font-size: 12.500px;
    color: #3b7cb8;
    height: 16px;
    line-height: 16px;
    white-space: nowrap;
    letter-spacing: .075px;
}

.code-line {
    display: flex;
    height: 18px;
    line-height: 18px;
}

.line-no {
    width: 42px;
    font-family: "Liberation Mono", monospace;
    font-size: 15px;
    color: #4a8ac0;
}

.sql {
    font-family: "Liberation Mono", monospace;
    font-size: 16.600px;
    color: #111;
    white-space: pre;
}

.kw {
    color: #6a6ac8;
}

.star {
    color: #8a3030;
}

.str {
    color: #e0202a;
}

.caret {
    display: inline-block;
    width: 1px;
    height: 18px;
    background: #111;
    vertical-align: top;
}

.result-tabs {
    height: 27px;
    flex: none;
    display: flex;
    align-items: flex-end;
    font-family: "DejaVu Sans", sans-serif;
    font-size: 11px;
    color: #d6e4f1;
}

.result-tab {
    height: 23px;
    display: flex;
    align-items: center;
    padding-left: 6px;
    gap: 5px;
    width: 105px;
}

.result-tab svg {
    width: 14px;
    height: 14px;
}

.result-tab-on {
    background: #fff;
    width: 116px;
    padding-left: 7px;
    color: #111;
    font-weight: 700;
    font-size: 12px;
}

.result-tab-info {
    width: auto;
    padding-left: 6px;
    gap: 3px;
}

.result-bar {
    height: 30px;
    flex: none;
    background: #f4f4f4;
    display: flex;
    align-items: center;
    margin-right: 5px;
    padding: 0 1px;
    color: #222;
    font-size: 11px;
    white-space: nowrap;
    letter-spacing: -.6px;
}

.rb {
    width: 18px;
    height: 18px;
    margin: 0 2.250px;
    flex: none;
}

.rb-first {
    margin-left: 0;
}

.rb-wide {
    margin-left: 5.750px;
    margin-right: 0;
}

.rb-caret {
    width: 7px;
    height: 4px;
    flex: none;
}

.rb-sep {
    width: 1px;
    height: 22px;
    background: #888;
    margin: 0 .750px 0 4px;
    flex: none;
}

.rb-sep-b {
    margin: 0 5px 0 2.750px;
}

.view-on {
    width: 22px;
    height: 22px;
    flex: none;
    background: #dcedf9;
    border: 1px solid #a9cde8;
    display: flex;
    align-items: center;
    justify-content: center;
}

.view-on svg {
    width: 16px;
    height: 16px;
}

.rb-sep-c {
    margin-left: auto;
    margin-right: 3.750px;
}

.rb-refresh {
    margin: 0 8px 0 2.750px;
}

.limit-box {
    width: 12px;
    height: 12px;
    border: 1px solid #333;
    background: #fff;
    flex: none;
    display: flex;
    margin-right: 4px;
}

.limit-box svg {
    width: 10px;
    height: 10px;
}

.limit-label {
    width: 54px;
    flex: none;
}

.first-label {
    width: 44px;
    flex: none;
}

.pager {
    width: 16px;
    height: 16px;
    background: #dcdcdc;
    flex: none;
    display: flex;
    align-items: center;
    justify-content: center;
}

.pager svg {
    width: 6px;
    height: 9px;
}

.num-input {
    height: 18px;
    background: #fff;
    border: 1px solid #777;
    padding-left: 2px;
    line-height: 16px;
    flex: none;
    font-size: 12px;
    letter-spacing: 0;
}

.first-input {
    width: 50px;
    margin: 0 4px;
}

.rows-label {
    width: 49px;
    margin-left: 7px;
    flex: none;
}

.rows-input {
    width: 50px;
}

/* data grid */
.grid-wrap {
    flex: 1;
    background: #fff;
    min-height: 0;
    overflow: hidden;
}

.grid {
    width: 1316px;
    table-layout: fixed;
    border-collapse: collapse;
    font-family: "Liberation Mono", monospace;
    font-size: 15px;
    color: #222;
}

.c-check { width: 25px; }
.c-id { width: 78px; }
.c-question { width: 601px; }
.c-pub { width: 116px; }
.c-exp { width: 114px; }
.c-created { width: 191px; }
.c-updated { width: 191px; }

.grid th,
.grid td {
    height: 18px;
    padding: 0 2px;
    border: 1px solid #bcbcbc;
    white-space: nowrap;
    overflow: hidden;
    font-weight: 400;
    text-align: left;
    line-height: 16px;
}

.grid th {
    background: #f0f0f0;
    height: 17px;
}

.grid th.sel-col {
    background: #4aa5f2;
    color: #e8f3fc;
    padding-left: 3px;
}

.grid tbody tr:nth-child(even) {
    background: #f8f8f8;
}

.grid tbody tr.row-sel {
    background: #b5d5f4;
}

.grid .mark {
    text-align: center;
    padding: 0;
    background: #f7f7f7;
}

.chk {
    display: inline-block;
    width: 11px;
    height: 11px;
    border: 2px solid #555;
    background: #fff;
    vertical-align: -1px;
}

.grid .num {
    text-align: right;
}

.grid .q {
    padding-left: 1px;
}

.grid .null {
    font-style: italic;
    font-size: 13.600px;
    padding-left: 4px;
}

.grid .cell-focus {
    outline: 2px solid #3b6f9e;
    outline-offset: -1px;
}

.db-bar {
    height: 20px;
    flex: none;
    color: #f2f6fa;
    font-size: 11px;
    line-height: 20px;
    padding-left: 2px;
    letter-spacing: -.2px;
}

.db-bar b {
    letter-spacing: .6px;
}

.db-bar-table {
    margin-left: 2px;
}

/* status */
.statusbar {
    flex: 1;
    display: flex;
    align-items: center;
    padding: 1px 0 0 7px;
    letter-spacing: -.3px;
    color: #222;
    position: relative;
}

.st-msg { width: 960px; }
.st-rows { width: 91px; }
.st-pos { width: 127px; }
.st-conn { width: 357px; }

.st-reg {
    font-family: "DejaVu Sans", sans-serif;
    font-size: 10.500px;
    letter-spacing: 0;
    color: #4a8ac0;
    text-decoration: underline;
}

.st-grip {
    position: absolute;
    right: 1px;
    bottom: 1px;
    width: 9px;
    height: 9px;
}
```
